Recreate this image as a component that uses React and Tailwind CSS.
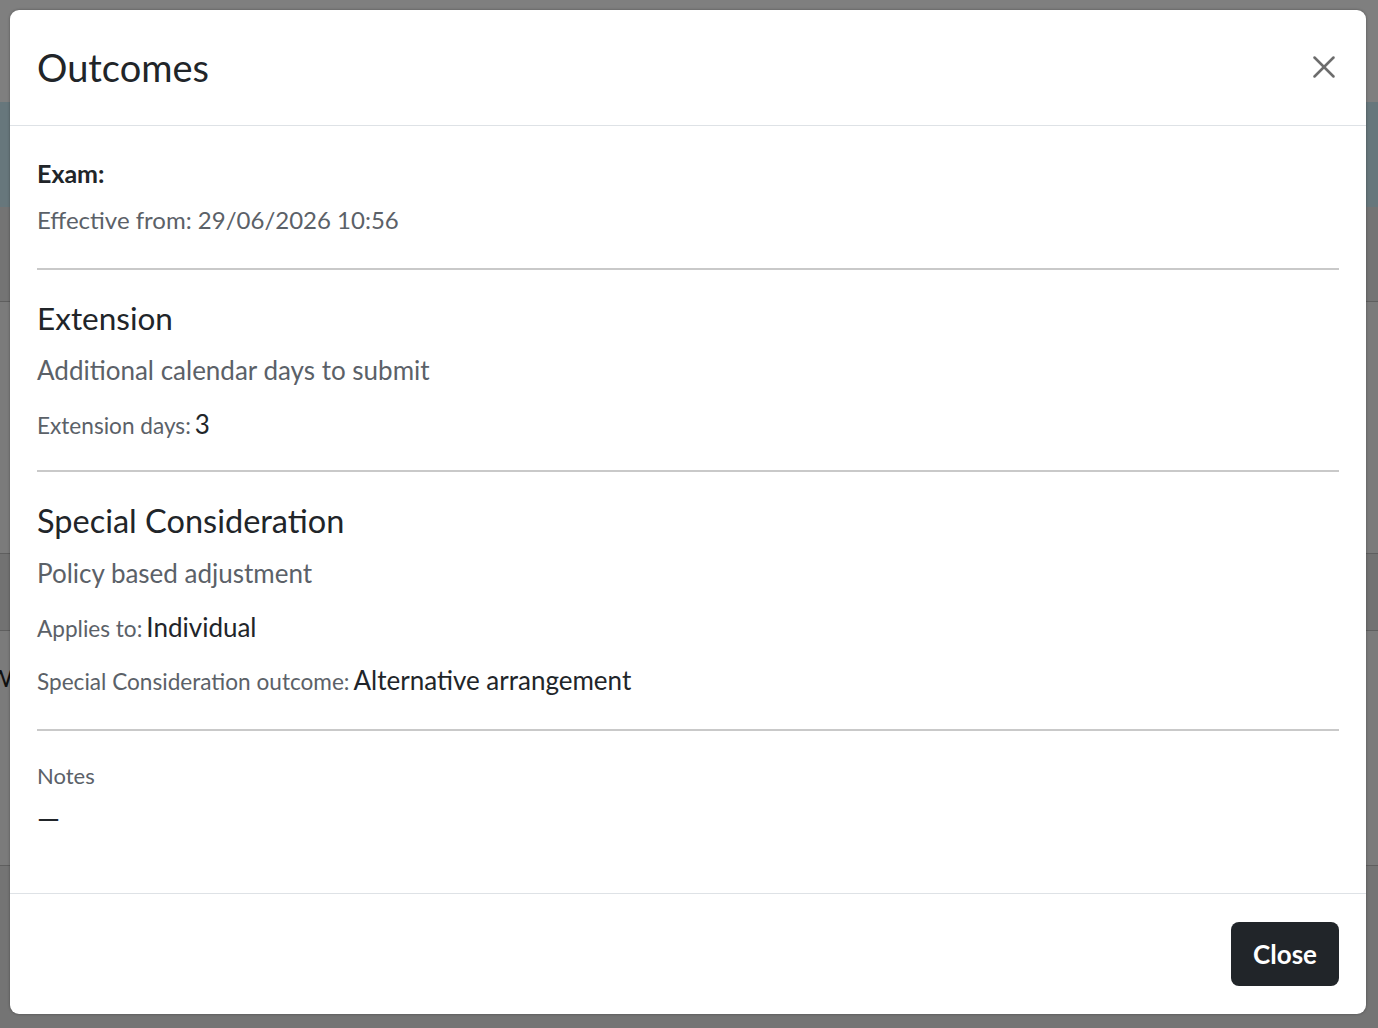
import { X } from "lucide-react";

const font = { fontFamily: "Lato, 'Noto Sans', sans-serif" };

function Field({ label, value }) {
    return (
        <div className="h-[34px] flex items-baseline leading-[34px]">
            <span className="text-[22.6px] text-[#5b6168]">{label}</span>
            <span className="ml-[4px] text-[26px] text-[#212529]">{value}</span>
        </div>
    );
}

function Divider({ className }) {
    return <div className={"h-[2px] bg-[#c9c9c9] " + className} />;
}

export default function App() {
    return (
        <div className="relative w-[1378px] h-[1028px] overflow-hidden bg-[#7f7f7f]" style={font}>
            {/* page behind the overlay */}
            <div className="flex flex-col h-full">
                <div className="h-[102px]" />
                <div className="h-[105px] bg-[#67777c]" />
                <div className="h-[95px] bg-[#747474] border-b border-[#5f5f5f]" />
                <div className="h-[252px] bg-[#7b7b7b] border-b border-[#5f5f5f]" />
                <div className="h-[77px] bg-[#727272] border-b border-[#5f5f5f]" />
                <div className="h-[235px] bg-[#7b7b7b] border-b border-[#5f5f5f] flex items-center">
                    <span className="-ml-[12px] -mt-[140px] text-[24px] text-[#111]">W</span>
                </div>
                <div className="flex-1 bg-[#747474]" />
            </div>

            {/* modal */}
            <div className="absolute left-[10px] top-[10px] w-[1356px] h-[1004px] bg-white rounded-[9px] flex flex-col shadow-[0_0_3px_rgba(0,0,0,0.35)]">
                <div className="h-[116px] shrink-0 flex items-center justify-between pl-[27px] pr-[28px] border-b border-[#dee2e6]">
                    <h1 className="text-[38px] leading-[48px] text-[#212529] -mt-[2px]">Outcomes</h1>
                    <X size={38} strokeWidth={1.6} className="text-[#6c6c6c] -mr-[5px] -mt-[2px]" />
                </div>

                <div className="flex-1 px-[27px] pt-[30px]">
                    <div className="text-[25px] leading-[34px] font-bold text-[#212529]">Exam:</div>
                    <div className="mt-[13px] text-[24px] leading-[34px] text-[#5b6168]">Effective from: 29/06/2026 10:56</div>

                    <Divider className="mt-[31px]" />

                    <div className="mt-[28px] text-[31.5px] leading-[40px] text-[#212529]">Extension</div>
                    <div className="mt-[15px] text-[26px] leading-[34px] text-[#5b6168]">Additional calendar days to submit</div>
                    <div className="mt-[20px]">
                        <Field label="Extension days:" value="3" />
                    </div>

                    <Divider className="mt-[29px]" />

                    <div className="mt-[29px] text-[32.5px] leading-[40px] text-[#212529]">Special Consideration</div>
                    <div className="mt-[15px] text-[26px] leading-[34px] text-[#5b6168]">Policy based adjustment</div>
                    <div className="mt-[20px]">
                        <Field label="Applies to:" value="Individual" />
                    </div>
                    <div className="mt-[19px]">
                        <Field label="Special Consideration outcome:" value="Alternative arrangement" />
                    </div>

                    <Divider className="mt-[32px]" />

                    <div className="mt-[30px] text-[22px] leading-[30px] text-[#5b6168]">Notes</div>
                    <div className="mt-[12px] text-[29px] leading-[30px] text-[#212529]">—</div>
                </div>

                <div className="h-[121px] shrink-0 flex items-center justify-end px-[27px] border-t border-[#dee2e6]">
                    <button
                        type="button"
                        className="w-[108px] h-[64px] rounded-[8px] bg-[#212529] text-white text-[26px] font-bold"
                    >
                        Close
                    </button>
                </div>
            </div>
        </div>
    );
}
